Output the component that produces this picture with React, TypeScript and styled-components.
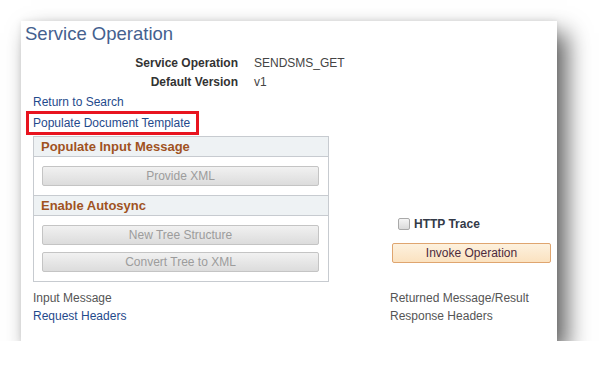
import styled, { createGlobalStyle } from 'styled-components';

const GlobalStyle = createGlobalStyle`
    body {
        margin: 0;
        background: #ffffff;
        font-family: Arial, "Liberation Sans", sans-serif;
    }
`;

const fields = [
    { label: 'Service Operation', value: 'SENDSMS_GET' },
    { label: 'Default Version', value: 'v1' },
];

const App = () => {
    return (
        <Page>
            <GlobalStyle />
            <Card>
                <Title>Service Operation</Title>
                <Fields>
                    {fields.map((f) => (
                        <FieldRow key={f.label}>
                            <FieldLabel>{f.label}</FieldLabel>
                            <FieldValue>{f.value}</FieldValue>
                        </FieldRow>
                    ))}
                </Fields>
                <LinkList>
                    <Link>Return to Search</Link>
                    <Highlight>
                        <Link>Populate Document Template</Link>
                    </Highlight>
                </LinkList>
                <MainRow>
                    <GroupBox>
                        <GroupHeader>Populate Input Message</GroupHeader>
                        <GroupBody>
                            <GrayButton disabled>Provide XML</GrayButton>
                        </GroupBody>
                        <GroupHeader $divider>Enable Autosync</GroupHeader>
                        <GroupBody>
                            <GrayButton disabled>New Tree Structure</GrayButton>
                            <GrayButton disabled>Convert Tree to XML</GrayButton>
                        </GroupBody>
                    </GroupBox>
                    <SideColumn>
                        <CheckRow>
                            <CheckBox />
                            <CheckLabel>HTTP Trace</CheckLabel>
                        </CheckRow>
                        <InvokeButton>Invoke Operation</InvokeButton>
                    </SideColumn>
                </MainRow>
                <BottomRow>
                    <BottomColumn>
                        <PlainText>Input Message</PlainText>
                        <Link>Request Headers</Link>
                    </BottomColumn>
                    <BottomColumn>
                        <PlainText>Returned Message/Result</PlainText>
                        <PlainText>Response Headers</PlainText>
                    </BottomColumn>
                </BottomRow>
            </Card>
        </Page>
    );
};

const Page = styled.div`
    padding: 21px 0 0 21px;
`;

const Card = styled.div`
    width: 536px;
    height: 320px;
    box-sizing: border-box;
    background: #ffffff;
    box-shadow: 10px 12px 22px rgba(0, 0, 0, 0.62), 0 0 6px rgba(0, 0, 0, 0.08);
    display: flex;
    flex-direction: column;
`;

const Title = styled.h1`
    margin: 0;
    padding: 1px 0 0 4px;
    font-size: 18.5px;
    line-height: 24px;
    font-weight: normal;
    color: #44618f;
`;

const Fields = styled.div`
    margin-top: 8px;
    display: flex;
    flex-direction: column;
`;

const FieldRow = styled.div`
    display: grid;
    grid-template-columns: 217px auto;
    column-gap: 16px;
    font-size: 12px;
    line-height: 19px;
`;

const FieldLabel = styled.span`
    text-align: right;
    font-weight: bold;
    color: #333333;
`;

const FieldValue = styled.span`
    color: #444444;
`;

const LinkList = styled.div`
    margin-top: 2px;
    padding-left: 12px;
    display: flex;
    flex-direction: column;
    align-items: flex-start;
    font-size: 12px;
    line-height: 17px;
`;

const Link = styled.a`
    color: #1f4a8c;
    cursor: pointer;
    font-size: 12px;
`;

const Highlight = styled.div`
    margin-left: -7px;
    border: 3px solid #e8141f;
    padding: 0 6px 0 4px;
    line-height: 18px;
`;

const MainRow = styled.div`
    margin: 1px 0 0 12px;
    display: flex;
    gap: 63px;
`;

const GroupBox = styled.div`
    width: 296px;
    box-sizing: border-box;
    border: 1px solid #c7cbd0;
`;

const GroupHeader = styled.div<{ $divider?: boolean }>`
    height: 19px;
    padding-left: 7px;
    background: #eef2f4;
    border-bottom: 1px solid #c7cbd0;
    border-top: ${({ $divider }) => ($divider ? '1px solid #c7cbd0' : 'none')};
    font-size: 13px;
    font-weight: bold;
    line-height: 19px;
    color: #a0521f;
`;

const GroupBody = styled.div`
    padding: 9px 9px 9px 8px;
    display: flex;
    flex-direction: column;
    gap: 7px;
`;

const GrayButton = styled.button`
    height: 20px;
    padding: 0;
    border: 1px solid #c4c4c4;
    border-radius: 2px;
    background: linear-gradient(#f1f1f1, #dcdcdc);
    font-family: Arial, "Liberation Sans", sans-serif;
    font-size: 12px;
    color: #9c9c9c;
`;

const SideColumn = styled.div`
    width: 159px;
    display: flex;
    flex-direction: column;
    justify-content: flex-end;
    padding-bottom: 19px;
`;

const CheckRow = styled.div`
    display: flex;
    align-items: center;
    gap: 4px;
    height: 20px;
    padding-left: 6px;
    margin-bottom: 9px;
`;

const CheckBox = styled.span`
    width: 12px;
    height: 12px;
    box-sizing: border-box;
    border: 1px solid #a9a9a9;
    border-radius: 2px;
    background: linear-gradient(#f5f5f5, #dadada);
`;

const CheckLabel = styled.span`
    font-size: 12px;
    font-weight: bold;
    color: #333a48;
`;

const InvokeButton = styled.button`
    height: 20px;
    padding: 0;
    border: 1px solid #dfa56f;
    border-radius: 2px;
    background: linear-gradient(#fdf1de, #fbe2c0);
    font-family: Arial, "Liberation Sans", sans-serif;
    font-size: 12px;
    color: #4e2a3c;
`;

const BottomRow = styled.div`
    margin: 7px 0 0 12px;
    display: grid;
    grid-template-columns: 357px auto;
    line-height: 18px;
`;

const BottomColumn = styled.div`
    display: flex;
    flex-direction: column;
    align-items: flex-start;
`;

const PlainText = styled.span`
    font-size: 12px;
    color: #555555;
`;

export default App;
